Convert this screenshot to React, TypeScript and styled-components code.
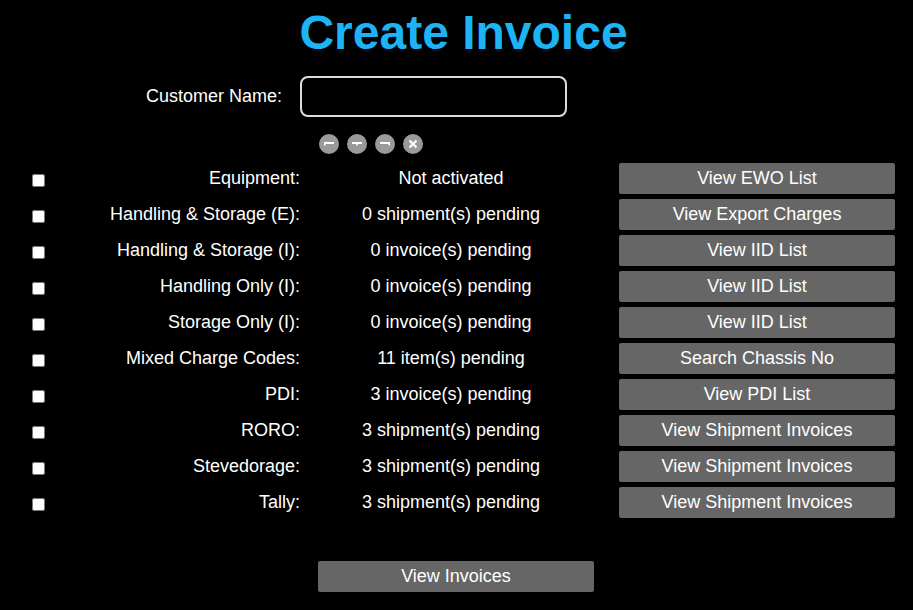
import React from "react";
import styled, { createGlobalStyle } from "styled-components";

const Global = createGlobalStyle`
  body { margin: 0; background: #000; color: #fff; font-family: "Liberation Sans", Arial, sans-serif; }
`;

const Page = styled.div`
  width: 913px;
  height: 610px;
  background: #000;
  padding-top: 4px;
  box-sizing: border-box;
`;

const Title = styled.h1`
  margin: 0;
  text-align: center;
  font-size: 48px;
  font-weight: bold;
  color: #1cb4f5;
  line-height: 58px;
  padding-left: 14px;
`;

const CustomerRow = styled.div`
  display: flex;
  align-items: center;
  margin-top: 14px;
  height: 41px;
`;

const CustomerLabel = styled.label`
  width: 300px;
  text-align: right;
  font-size: 18px;
  padding-right: 18px;
  box-sizing: border-box;
`;

const NameInput = styled.input`
  width: 267px;
  height: 41px;
  box-sizing: border-box;
  border: 2px solid #ddd;
  border-radius: 8px;
  background: #000;
  color: #fff;
  font-size: 18px;
  outline: none;
`;

const IconRow = styled.div`
  display: flex;
  gap: 8px;
  margin: 17px 0 0 319px;
  height: 20px;
`;

const IconBtn = styled.span`
  width: 20px;
  height: 20px;
  border-radius: 50%;
  background: #9a9a9a;
  display: flex;
  align-items: center;
  justify-content: center;
`;

const Grid = styled.div`
  display: grid;
  grid-template-columns: 16px 254px 302px 293px;
  grid-auto-rows: 36px;
  margin: 6px 0 0 30px;
  align-items: center;
  font-size: 18px;
`;

const Check = styled.input`
  margin: 0;
  width: 13px;
  height: 13px;
  justify-self: center;
  margin-top: 4px;
`;

const Label = styled.div`
  text-align: right;
`;

const Status = styled.div`
  text-align: center;
`;

const Button = styled.button<{ $w?: number }>`
  width: ${(p) => p.$w ?? 276}px;
  height: 31px;
  justify-self: end;
  background: #666;
  color: #fff;
  border: none;
  border-radius: 2px;
  font-family: inherit;
  font-size: 18px;
  padding: 0;
`;

const Footer = styled.div`
  display: flex;
  justify-content: flex-start;
  padding-left: 318px;
  margin-top: 41px;
`;

const Align = ({ x }: { x: number }) => (
  <svg width="12" height="12" viewBox="0 0 12 12">
    <path d="M1 5h10" stroke="#fff" strokeWidth="2" />
    <path d={`M${x} 5v2.5`} stroke="#fff" strokeWidth="1.5" />
  </svg>
);

const rows = [
  ["Equipment:", "Not activated", "View EWO List"],
  ["Handling & Storage (E):", "0 shipment(s) pending", "View Export Charges"],
  ["Handling & Storage (I):", "0 invoice(s) pending", "View IID List"],
  ["Handling Only (I):", "0 invoice(s) pending", "View IID List"],
  ["Storage Only (I):", "0 invoice(s) pending", "View IID List"],
  ["Mixed Charge Codes:", "11 item(s) pending", "Search Chassis No"],
  ["PDI:", "3 invoice(s) pending", "View PDI List"],
  ["RORO:", "3 shipment(s) pending", "View Shipment Invoices"],
  ["Stevedorage:", "3 shipment(s) pending", "View Shipment Invoices"],
  ["Tally:", "3 shipment(s) pending", "View Shipment Invoices"],
];

export default function App() {
  return (
    <Page>
      <Global />
      <Title>Create Invoice</Title>
      <CustomerRow>
        <CustomerLabel>Customer Name:</CustomerLabel>
        <NameInput />
      </CustomerRow>
      <IconRow>
        <IconBtn><Align x={1.75} /></IconBtn>
        <IconBtn><Align x={6} /></IconBtn>
        <IconBtn><Align x={10.25} /></IconBtn>
        <IconBtn>
          <svg width="12" height="12" viewBox="0 0 12 12">
            <path d="M2.5 2.5l7 7M9.5 2.5l-7 7" stroke="#fff" strokeWidth="2.2" />
          </svg>
        </IconBtn>
      </IconRow>
      <Grid>
        {rows.map(([l, s, b], i) => (
          <React.Fragment key={i}>
            <Check type="checkbox" />
            <Label>{l}</Label>
            <Status>{s}</Status>
            <Button>{b}</Button>
          </React.Fragment>
        ))}
      </Grid>
      <Footer>
        <Button>View Invoices</Button>
      </Footer>
    </Page>
  );
}
